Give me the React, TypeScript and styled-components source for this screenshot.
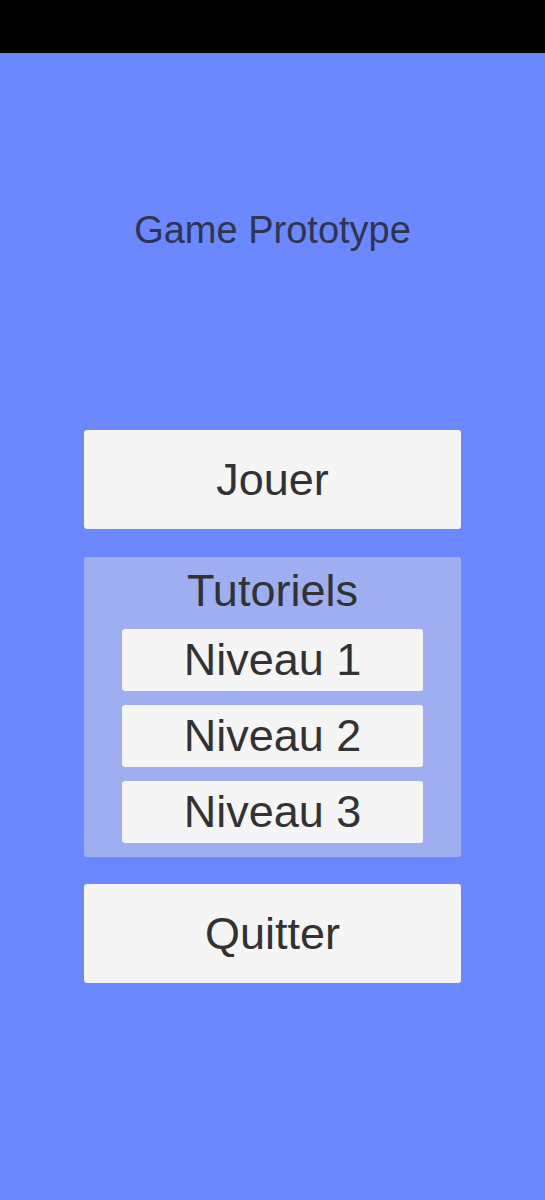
import styled, { createGlobalStyle } from 'styled-components'

const GlobalStyle = createGlobalStyle`
  html, body {
    margin: 0;
    padding: 0;
    background: #6b88ff;
    font-family: 'Liberation Sans', Arial, sans-serif;
  }
`

const Screen = styled.div`
  width: 545px;
  height: 1200px;
  display: flex;
  flex-direction: column;
  background: #6b88ff;
`

const StatusBar = styled.div`
  height: 53px;
  background: #000000;
  flex-shrink: 0;
`

const Main = styled.main`
  display: flex;
  flex-direction: column;
  align-items: center;
  padding-top: 155px;
`

const Title = styled.h1`
  margin: 0;
  font-size: 38px;
  font-weight: 400;
  line-height: 44px;
  color: #2f3550;
`

const Menu = styled.div`
  margin-top: 178px;
  width: 377px;
  display: flex;
  flex-direction: column;
  gap: 27px;
`

const MenuButton = styled.button<{ $height: number }>`
  height: ${(p) => p.$height}px;
  width: 100%;
  display: flex;
  align-items: center;
  justify-content: center;
  border: none;
  border-radius: 3px;
  background: #f5f5f5;
  color: #323232;
  font-family: 'Liberation Sans', Arial, sans-serif;
  font-size: 45px;
  padding: 0;
  cursor: pointer;
`

const Panel = styled.section`
  margin-top: 1px;
  display: flex;
  flex-direction: column;
  gap: 14px;
  padding: 8px 38px 14px;
  background: #9eaef0;
  border-radius: 2px;
`

const PanelTitle = styled.h2`
  margin: 0 0 -2px;
  height: 52px;
  line-height: 52px;
  font-size: 45px;
  font-weight: 400;
  text-align: center;
  color: #323232;
`

const levels = ['Niveau 1', 'Niveau 2', 'Niveau 3']

export default function App() {
  return (
    <>
      <GlobalStyle />
      <Screen>
        <StatusBar />
        <Main>
          <Title>Game Prototype</Title>
          <Menu>
            <MenuButton $height={99}>Jouer</MenuButton>
            <Panel>
              <PanelTitle>Tutoriels</PanelTitle>
              {levels.map((level) => (
                <MenuButton key={level} $height={62}>
                  {level}
                </MenuButton>
              ))}
            </Panel>
            <MenuButton $height={99}>Quitter</MenuButton>
          </Menu>
        </Main>
      </Screen>
    </>
  )
}
